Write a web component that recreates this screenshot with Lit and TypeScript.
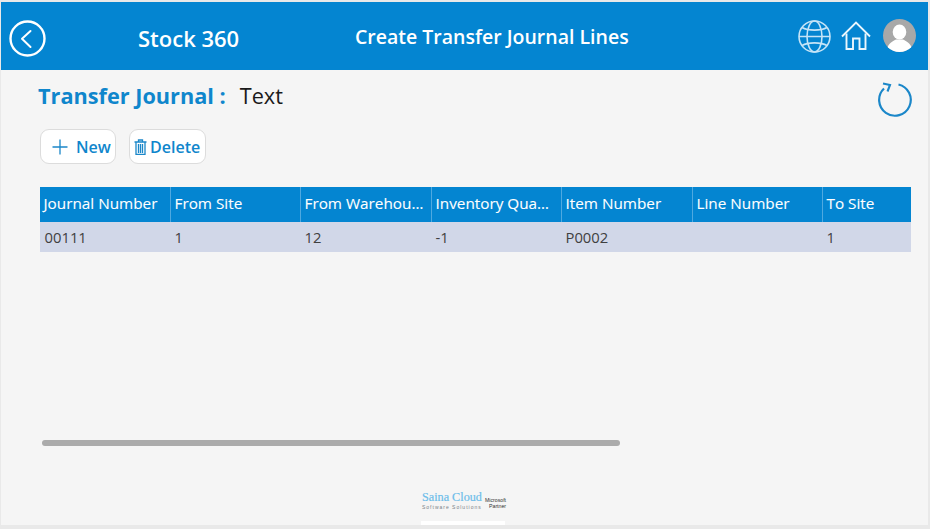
import { LitElement, html, css } from "lit";
import { customElement } from "lit/decorators.js";

const HEAD = ["Journal Number", "From Site", "From Warehouse", "Inventory Quantity", "Item Number", "Line Number", "To Site"];
const ROW = ["00111", "1", "12", "-1", "P0002", "", "1"];

@customElement("app-root")
export class AppRoot extends LitElement {
  static styles = css`
    :host { display: block; width: 930px; height: 529px; overflow: hidden; background: #e9e9e9; font-family: "Open Sans", sans-serif; }
    .frame { margin: 2px 2px 4px 1px; height: 523px; background: #f5f5f5; display: flex; flex-direction: column; }
    .bar { height: 68px; flex: none; background: #0485d1; color: #fff; display: flex; align-items: center; padding-left: 8px; }
    .back { width: 37px; height: 37px; flex: none; display: block; margin-top: 5px; }
    .brand { margin-left: 92px; width: 217px; flex: none; font-size: 22px; font-weight: 600; line-height: 30px; margin-top: 3px; }
    .title { width: 275px; flex: none; font-size: 19.5px; font-weight: 600; line-height: 26px; margin-top: 2px; white-space: nowrap; }
    .icons { margin-left: 168px; display: flex; align-items: center; gap: 10px; }
    .icons svg { display: block; flex: none; }
    .avatar { margin-left: 2px; margin-top: -2px; }
    .content { flex: 1; display: flex; flex-direction: column; padding: 0 17px 0 39px; min-height: 0; }
    .heading { display: flex; justify-content: space-between; height: 59px; }
    .hleft { display: flex; align-items: baseline; margin-top: 10px; height: 32px; margin-left: -2px; }
    .hlabel { color: #0f86cc; font-size: 21.7px; font-weight: 700; line-height: 32px; }
    .hvalue { color: #1a1a1a; font-size: 21.7px; line-height: 32px; margin-left: 14px; }
    .refresh { margin-top: 10px; margin-right: -3px; width: 38px; height: 38px; display: block; }
    .buttons { display: flex; gap: 13px; height: 35px; }
    .btn { box-sizing: border-box; height: 35px; background: #fff; border: 1px solid #dcdcdc; border-radius: 9px; color: #0f86cc; font-size: 16px; font-weight: 600; display: flex; align-items: center; }
    .new { width: 76px; padding-left: 11px; gap: 8px; }
    .del { width: 77px; padding-left: 4px; gap: 3px; }
    .btn svg { display: block; flex: none; }
    .table { margin-top: 23px; display: grid; grid-template-columns: 130px 130px 131px 130px 131px 130px 89px; }
    .th { box-sizing: border-box; height: 35px; background: #0485d1; color: #fff; font-size: 15.3px; font-weight: 400; line-height: 33px; padding: 0 5px 0 3.5px; border-left: 1px solid #4fa9e0; white-space: nowrap; overflow: hidden; text-overflow: ellipsis; -webkit-text-stroke: 0.1px #fff; }
    .th:first-child { border-left: none; padding-left: 3.5px; }
    .td { box-sizing: border-box; height: 30px; background: #d1d7e8; color: #404040; font-size: 14.8px; line-height: 31px; padding-left: 4.5px; }
    .scroll { margin: 188px 0 0 2px; width: 578px; height: 6px; border-radius: 3px; background: #ababab; }
    .logo { margin: 44px 0 0 381px; width: 86px; display: flex; flex-direction: column; }
    .logoline { display: flex; align-items: center; gap: 3px; height: 22px; }
    .lname { display: flex; flex-direction: column; align-items: flex-start; margin-left: 1px; width: 60px; flex: none; }
    .saina { font-family: "Liberation Serif", serif; font-size: 12.2px; line-height: 12px; color: #6dbdea; white-space: nowrap; -webkit-text-stroke: 0.2px #6dbdea; }
    .soft { font-family: "Liberation Sans", sans-serif; font-size: 5px; line-height: 9px; letter-spacing: 1px; color: #7a8288; white-space: nowrap; }
    .ms { font-family: "Liberation Sans", sans-serif; font-size: 5.2px; line-height: 6px; color: #333; text-align: right; margin-top: 3px; white-space: nowrap; }
    .strip { height: 4px; width: 84px; background: #fff; margin-top: 9px; }
  `;

  render() {
    return html`<div class="frame">
      <div class="bar">
        <svg class="back" viewBox="0 0 37 37" fill="none" stroke="#fff"><circle cx="18.500" cy="18.500" r="17" stroke-width="2.400"/><path d="M21.500 11 L13 18.800 L21.500 27" stroke-width="2" stroke-linecap="round" stroke-linejoin="round"/></svg>
        <div class="brand">Stock 360</div>
        <div class="title">Create Transfer Journal Lines</div>
        <div class="icons">
          <svg width="33" height="33" viewBox="0 0 33 33" fill="none" stroke="#c5e4f7" stroke-width="1.600"><circle cx="16.500" cy="16.500" r="15.500"/><ellipse cx="16.500" cy="16.500" rx="7.500" ry="15.500"/><path d="M1 16.500h31M4 7.500 C10 11 23 11 29 7.500M4 25.500 C10 22 23 22 29 25.500"/></svg>
          <svg width="30" height="30" viewBox="0 0 30 30" fill="none" stroke="#eaf6fd" stroke-width="1.900"><path d="M1 15.500 L15 1.500 L29 15.500"/><path d="M5.500 12.500 V28 H12 V17.500 H18.500 V28 H24.500 V12.500"/></svg>
          <svg class="avatar" width="33" height="33" viewBox="0 0 33 33"><clipPath id="c"><circle cx="16.500" cy="16.500" r="16.500"/></clipPath><circle cx="16.500" cy="16.500" r="16.500" fill="#a8a8a8"/><g fill="#fff" clip-path="url(#c)"><ellipse cx="16.500" cy="13" rx="6.800" ry="7.500"/><path d="M3.500 33 C4 25 9 22.500 13 20.500 H20 C24 22.500 29 25 29.500 33 Z"/></g></svg>
        </div>
      </div>
      <div class="content">
        <div class="heading">
          <div class="hleft"><span class="hlabel">Transfer Journal :</span><span class="hvalue">Text</span></div>
          <svg class="refresh" viewBox="0 0 38 38" fill="none" stroke="#1b87c9" stroke-width="2.200"><path d="M22.500 4.500 A15.800 15.800 0 1 1 8 8.500"/><path d="M7 3.500 L14 5 L11.500 11.500" stroke-width="2.100"/></svg>
        </div>
        <div class="buttons">
          <div class="btn new">
            <svg width="16" height="16" viewBox="0 0 16 16" stroke="#1b87c9" stroke-width="1.300"><path d="M8 0.500v15M0.500 8h15"/></svg>
            <span>New</span>
          </div>
          <div class="btn del">
            <svg width="13" height="16" viewBox="0 0 13 16" fill="none" stroke="#1b87c9" stroke-width="1.300"><path d="M0.500 3h12M4.500 3V1h4v2M2 3 V15.500h9V3M4.500 5v9M6.500 5v9M8.500 5v9"/></svg>
            <span>Delete</span>
          </div>
        </div>
        <div class="table">
          ${HEAD.map((h) => html`<div class="th">${h}</div>`)}
          ${ROW.map((c) => html`<div class="td">${c}</div>`)}
        </div>
        <div class="scroll"></div>
        <div class="logo">
          <div class="logoline">
            <div class="lname"><div class="saina">Saina Cloud</div><div class="soft">Software Solutions</div></div>
            <div class="ms">Microsoft<br />Partner</div>
          </div>
          <div class="strip"></div>
        </div>
      </div>
    </div>`;
  }
}
